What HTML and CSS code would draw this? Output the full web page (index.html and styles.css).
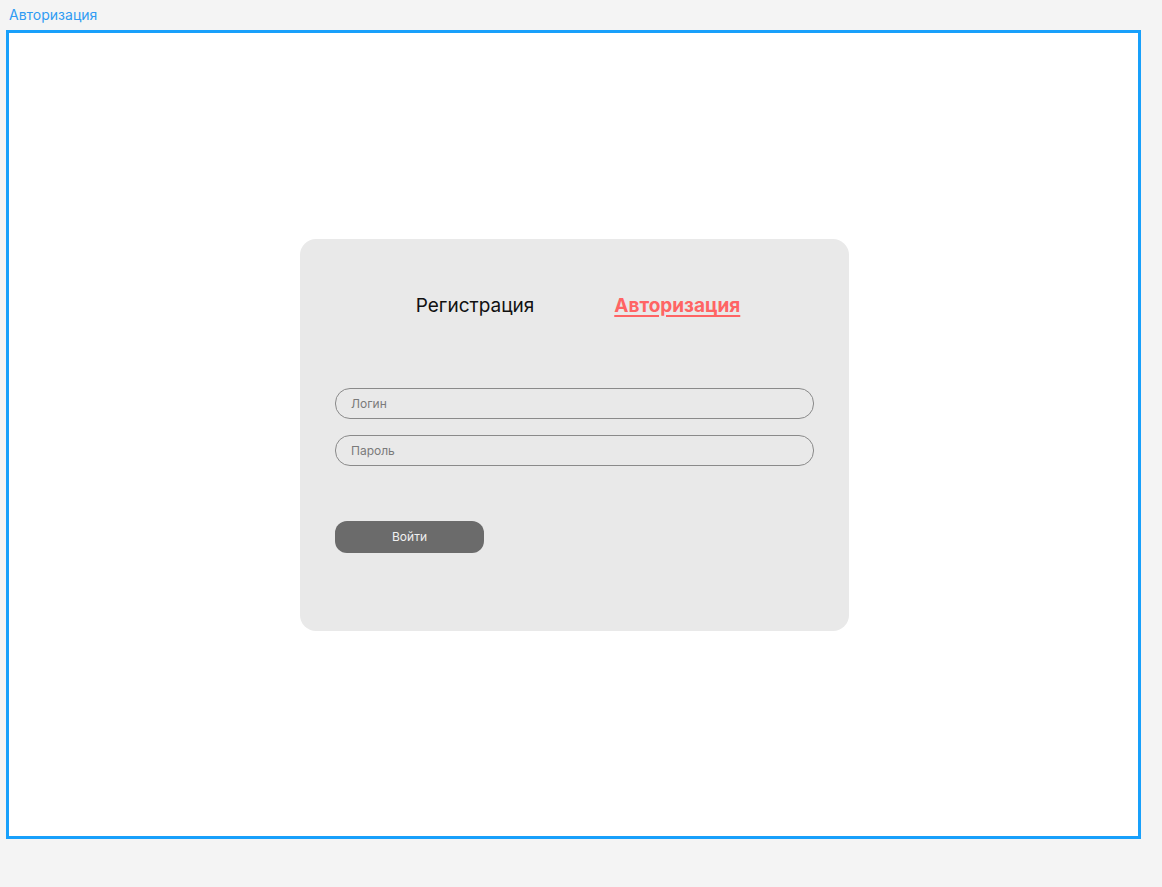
FILE: index.html
```html
<!DOCTYPE html>
<html lang="ru">
<head>
<meta charset="utf-8">
<title>Авторизация</title>
<link rel="stylesheet" href="styles.css">
</head>
<body>
<div class="frame-label">Авторизация</div>
<div class="frame">
  <div class="card">
    <div class="tabs">
      <span class="tab">Регистрация</span>
      <span class="tab tab-active">Авторизация</span>
    </div>
    <div class="fields">
      <div class="input"><span class="placeholder">Логин</span></div>
      <div class="input"><span class="placeholder">Пароль</span></div>
    </div>
    <div class="btn">Войти</div>
  </div>
</div>
</body>
</html>
```
FILE: styles.css
```css
html, body {
  margin: 0;
  padding: 0;
  background: #f4f4f4;
  font-family: Inter, "Noto Sans", "Liberation Sans", sans-serif;
}
.frame-label {
  height: 30px;
  padding-left: 9px;
  box-sizing: border-box;
  padding-top: 6px;
  font-size: 14px;
  line-height: 18px;
  color: #2f9bf3;
}
.frame {
  margin-left: 6px;
  width: 1135px;
  height: 809px;
  box-sizing: border-box;
  border: 3px solid #18a0fb;
  background: #ffffff;
  display: flex;
  align-items: center;
  justify-content: center;
}
.card {
  width: 549px;
  height: 392px;
  margin-left: 2px;
  box-sizing: border-box;
  background: #e9e9e9;
  border-radius: 16px;
  padding: 55px 35px 0 35px;
  display: flex;
  flex-direction: column;
}
.tabs {
  display: flex;
  justify-content: center;
  gap: 80px;
  height: 24px;
  line-height: 24px;
  font-size: 19px;
  padding-left: 7px;
}
.tab {
  color: #111;
}
.tab-active {
  color: #ff6464;
  font-weight: 700;
  text-decoration: underline;
  text-decoration-thickness: 2px;
  text-underline-offset: 3px;
}
.fields {
  margin-top: 70px;
  display: flex;
  flex-direction: column;
  gap: 16px;
}
.input {
  height: 31px;
  box-sizing: border-box;
  border: 1px solid #8a8a8a;
  border-radius: 15px;
  padding-left: 15px;
  display: flex;
  align-items: center;
}
.placeholder {
  font-size: 12px;
  color: #7a7a7a;
}
.btn {
  margin-top: 55px;
  width: 149px;
  height: 32px;
  border-radius: 12px;
  background: #6b6b6b;
  color: #f0f0f0;
  font-size: 12px;
  display: flex;
  align-items: center;
  justify-content: center;
}
```
